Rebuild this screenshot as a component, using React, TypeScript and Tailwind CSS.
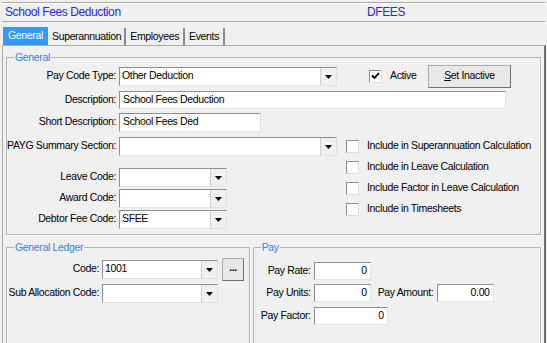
import React from "react";

const font = "font-['Liberation_Sans',Arial,sans-serif]";

function Arrow() {
  return (
    <div className="flex h-full w-[16px] items-center justify-center border-l border-[#d0d0d0] bg-[#f0f0f0]">
      <svg width="7" height="6" viewBox="0 0 7 6">
        <rect x="0" y="0" width="7" height="1" fill="#fff" />
        <polygon points="0,2 7,2 3.5,6" fill="#000" />
      </svg>
    </div>
  );
}

function Combo({ w, value = "", h = "h-[19px]" }: { w: string; value?: string; h?: string }) {
  return (
    <div
      className={`${w} ${h} flex items-stretch border border-[#8e8f8f] border-b-[#e3e3e3] border-r-[#e3e3e3] bg-white`}
    >
      <div className="flex flex-1 items-center pl-[2px] text-black">{value}</div>
      <Arrow />
    </div>
  );
}

function Input({ w, value = "", right = false, h = "h-[18px]" }: { w: string; value?: string; right?: boolean; h?: string }) {
  return (
    <div
      className={`${w} ${h} flex items-center border border-[#8e8f8f] border-b-[#e3e3e3] border-r-[#e3e3e3] bg-white px-[3px] ${
        right ? "justify-end" : ""
      }`}
    >
      {value}
    </div>
  );
}

function Check({ checked = false, label }: { checked?: boolean; label: string }) {
  return (
    <div className="flex h-[13px] items-center gap-[8px] whitespace-nowrap">
      <div className="flex h-[13px] w-[13px] shrink-0 items-center justify-center border border-[#8e8f8f] border-b-[#e0e0e0] border-r-[#e0e0e0] bg-white">
        {checked && (
          <svg width="9" height="8" viewBox="0 0 9 8">
            <path d="M1 3.5 L3.5 6 L8 1" stroke="#000" strokeWidth="1.8" fill="none" />
          </svg>
        )}
      </div>
      <span>{label}</span>
    </div>
  );
}

function Label({ w, text }: { w: string; text: string }) {
  return <div className={`${w} shrink-0 whitespace-nowrap pr-[3px] text-right`}>{text}</div>;
}

export default function App() {
  return (
    <div
      className={`${font} relative h-[343px] w-[547px] overflow-hidden bg-[#f0f0f0] text-[10.5px] tracking-[-0.35px] text-black`}
    >
      {/* header */}
      <div className="mx-[2px] mt-[2px] flex h-[20px] items-center border-y border-[#a9a9a9] shadow-[inset_0_1px_0_#fff]">
        <div className="w-[365px] pl-[3px] text-[12px] tracking-[-0.4px] text-[#2a2ad8]">School Fees Deduction</div>
        <div className="text-[12px] tracking-[-0.4px] text-[#2a2ad8]">DFEES</div>
      </div>

      {/* tabs */}
      <div className="mt-[4px] flex h-[19px] items-end pl-[3px]">
        <div className="flex h-[18px] w-[45px] items-center justify-center bg-[#3399ff] text-white">General</div>
        <div className="flex h-[17px] items-center border-r-2 border-[#888] pl-[4px] pr-[3px]">Superannuation</div>
        <div className="flex h-[17px] items-center border-r-2 border-[#888] px-[4px]">Employees</div>
        <div className="flex h-[17px] items-center border-r-2 border-[#888] px-[4px]">Events</div>
      </div>

      {/* tab page */}
      <div className="ml-[2px] mr-[1px] h-[300px] border-l border-t border-r-2 border-[#a9a9a9] border-r-[#707070] px-[3px] pt-[4px]">
        <fieldset className="h-[185px] border border-[#b5b5b5] shadow-[1px_1px_0_#fff]">
          <legend className="ml-[7px] px-[1px] text-[#3c7fe0]">General</legend>
          <div className="flex flex-col pt-[1px]">
            <div className="flex h-[19px] items-center">
              <Label w="w-[112px]" text="Pay Code Type:" />
              <Combo w="w-[218px]" value="Other Deduction" />
              <div className="ml-[32px] w-[59px]">
                <Check checked label="Active" />
              </div>
              <div className="flex h-[23px] w-[83px] items-center justify-center border border-[#adadad] border-b-[#707070] border-r-[#707070] bg-[#e8e8e8]">
                <span>
                  <span className="underline">S</span>et Inactive
                </span>
              </div>
            </div>
            <div className="mt-[5px] flex h-[18px] items-center">
              <Label w="w-[112px]" text="Description:" />
              <Input w="w-[387px]" value="School Fees Deduction" />
            </div>
            <div className="mt-[4px] flex h-[19px] items-center">
              <Label w="w-[112px]" text="Short Description:" />
              <Input w="w-[142px]" h="h-[19px]" value="School Fees Ded" />
            </div>
            <div className="mt-[5px] flex">
              <div className="flex flex-col">
                <div className="flex h-[19px] items-center">
                  <Label w="w-[112px]" text="PAYG Summary Section:" />
                  <Combo w="w-[218px]" />
                </div>
                <div className="mt-[12px] flex h-[19px] items-center">
                  <Label w="w-[112px]" text="Leave Code:" />
                  <Combo w="w-[108px]" />
                </div>
                <div className="mt-[2px] flex h-[19px] items-center">
                  <Label w="w-[112px]" text="Award Code:" />
                  <Combo w="w-[108px]" />
                </div>
                <div className="mt-[2px] flex h-[19px] items-center">
                  <Label w="w-[112px]" text="Debtor Fee Code:" />
                  <Combo w="w-[108px]" value="SFEE" />
                </div>
              </div>
              <div className="ml-[9px] flex flex-col gap-[8px] pt-[3px]">
                <Check label="Include in Superannuation Calculation" />
                <Check label="Include in Leave Calculation" />
                <Check label="Include Factor in Leave Calculation" />
                <Check label="Include in Timesheets" />
              </div>
            </div>
          </div>
        </fieldset>

        <div className="mt-[5px] flex gap-[3px]">
          <fieldset className="h-[110px] w-[245px] border border-[#b5b5b5] shadow-[1px_1px_0_#fff]">
            <legend className="ml-[7px] px-[1px] text-[#3c7fe0]">General Ledger</legend>
            <div className="flex flex-col pt-[4px]">
              <div className="flex h-[19px] items-center">
                <Label w="w-[95px]" text="Code:" />
                <Combo w="w-[116px]" value="1001" />
                <div className="ml-[4px] flex h-[23px] w-[22px] items-center justify-center border border-[#adadad] border-b-[#707070] border-r-[#707070] bg-[#e8e8e8] pb-[3px] font-bold">
                  ...
                </div>
              </div>
              <div className="mt-[5px] flex h-[19px] items-center">
                <Label w="w-[95px]" text="Sub Allocation Code:" />
                <Combo w="w-[116px]" />
              </div>
            </div>
          </fieldset>

          <fieldset className="h-[110px] w-[290px] border border-[#b5b5b5] shadow-[1px_1px_0_#fff]">
            <legend className="ml-[7px] px-[1px] text-[#3c7fe0]">Pay</legend>
            <div className="flex flex-col pt-[6px]">
              <div className="flex h-[18px] items-center">
                <Label w="w-[60px]" text="Pay Rate:" />
                <Input w="w-[57px]" value="0" right />
              </div>
              <div className="mt-[4px] flex h-[18px] items-center">
                <Label w="w-[60px]" text="Pay Units:" />
                <Input w="w-[57px]" value="0" right />
                <div className="ml-[7px] w-[59px] whitespace-nowrap">Pay Amount:</div>
                <Input w="w-[57px]" value="0.00" right />
              </div>
              <div className="mt-[5px] flex h-[18px] items-center">
                <Label w="w-[60px]" text="Pay Factor:" />
                <Input w="w-[74px]" value="0" right />
              </div>
            </div>
          </fieldset>
        </div>
      </div>
    </div>
  );
}
